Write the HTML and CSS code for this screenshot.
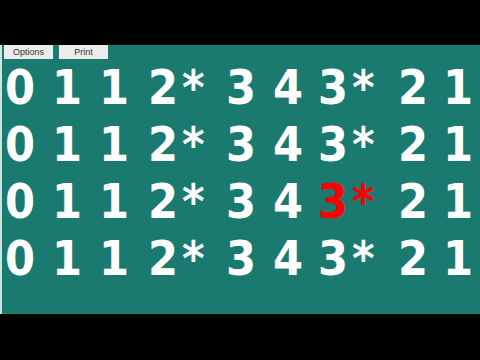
FILE: index.html
```html
<!DOCTYPE html>
<html lang="en">
<head>
    <meta charset="UTF-8">
    <title>Sequence</title>
    <link rel="stylesheet" href="styles.css">
</head>
<body>
    <div class="top-band"></div>
    <div class="board">
        <div class="toolbar">
            <button class="tool-button">Options</button>
            <button class="tool-button">Print</button>
        </div>
        <div class="rows">
            <div class="row"><span>0</span><span>1</span><span>1</span><span>2<span class="star">*</span></span><span>3</span><span>4</span><span>3<span class="star">*</span></span><span>2</span><span>1</span></div>
            <div class="row"><span>0</span><span>1</span><span>1</span><span>2<span class="star">*</span></span><span>3</span><span>4</span><span>3<span class="star">*</span></span><span>2</span><span>1</span></div>
            <div class="row"><span>0</span><span>1</span><span>1</span><span>2<span class="star">*</span></span><span>3</span><span>4</span><span class="hit">3<span class="star">*</span></span><span>2</span><span>1</span></div>
            <div class="row"><span>0</span><span>1</span><span>1</span><span>2<span class="star">*</span></span><span>3</span><span>4</span><span>3<span class="star">*</span></span><span>2</span><span>1</span></div>
        </div>
    </div>
</body>
</html>
```

FILE: styles.css
```css
body, html {
    margin: 0;
    padding: 0;
    width: 480px;
    height: 360px;
    background-color: #000;
    overflow: hidden;
}
.top-band {
    height: 45px;
}
.board {
    height: 269px;
    background-color: #1b7a6f;
    border-left: 2px solid #cfe3df;
    box-sizing: border-box;
}
.toolbar {
    display: flex;
    gap: 6px;
    padding-left: 2px;
    height: 14px;
}
.tool-button {
    width: 49px;
    height: 14px;
    padding: 0;
    border: none;
    background-color: #ececec;
    color: #333;
    font-family: 'Liberation Sans', Arial, sans-serif;
    font-size: 9px;
    line-height: 14px;
}
.rows {
    padding-left: 3px;
}
.row {
    display: grid;
    grid-template-columns: 47px 47px 49px 78px 47px 45px 80px 45px auto;
    font-family: 'DejaVu Sans Condensed', 'DejaVu Sans', sans-serif;
    font-stretch: condensed;
    font-weight: bold;
    font-size: 48px;
    line-height: 57px;
    color: #fff;
    white-space: pre;
}
.star {
    margin-left: 4px;
}
.hit {
    color: #f00;
}
```
